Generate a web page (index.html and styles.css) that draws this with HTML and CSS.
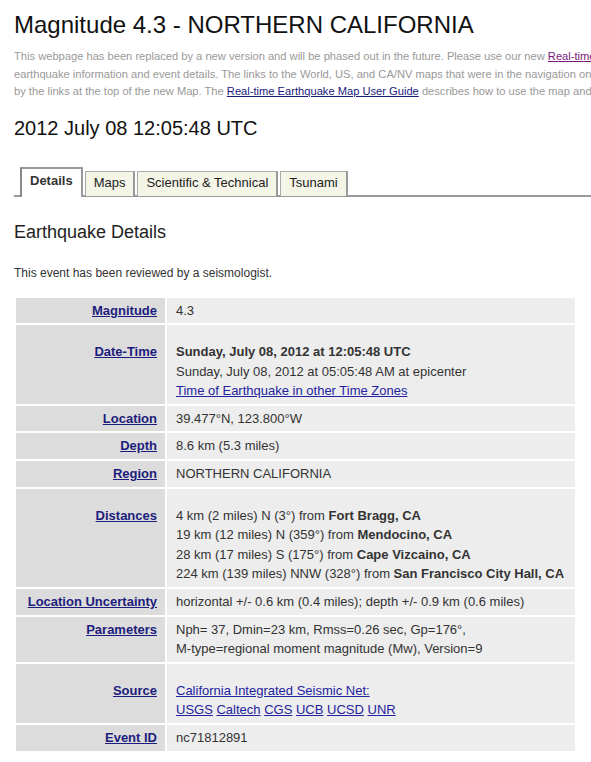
FILE: index.html
```html
<!DOCTYPE html>
<html lang="en">
<head>
    <meta charset="UTF-8">
    <meta name="viewport" content="width=device-width, initial-scale=1.0">
    <title>Magnitude 4.3 - NORTHERN CALIFORNIA</title>
    <link rel="stylesheet" href="styles.css">
</head>
<body>
    <div class="page">
        <h1>Magnitude 4.3 - NORTHERN CALIFORNIA</h1>

        <!-- old page notice, runs off the right edge -->
        <div class="notice">
            <div class="notice-line">This webpage has been replaced by a new version and will be phased out in the future. Please use our new <a href="#" class="visited">Real-time Earthquake Map</a> for the most up-to-date</div>
            <div class="notice-line">earthquake information and event details. The links to the World, US, and CA/NV maps that were in the navigation on the left of this page have been replaced</div>
            <div class="notice-line">by the links at the top of the new Map. The <a href="#">Real-time Earthquake Map User Guide</a> describes how to use the map and its features.</div>
        </div>

        <h2 class="event-time">2012 July 08 12:05:48 UTC</h2>

        <ul class="tabs">
            <li class="tab active">Details</li>
            <li class="tab">Maps</li>
            <li class="tab">Scientific &amp; Technical</li>
            <li class="tab">Tsunami</li>
        </ul>

        <h3>Earthquake Details</h3>

        <p class="reviewed">This event has been reviewed by a seismologist.</p>

        <table class="details">
            <tr>
                <th><a href="#">Magnitude</a></th>
                <td>4.3</td>
            </tr>
            <tr class="spaced">
                <th><a href="#">Date-Time</a></th>
                <td>
                    <strong>Sunday, July 08, 2012 at 12:05:48 UTC</strong><br>
                    Sunday, July 08, 2012 at 05:05:48 AM at epicenter<br>
                    <a href="#">Time of Earthquake in other Time Zones</a>
                </td>
            </tr>
            <tr>
                <th><a href="#">Location</a></th>
                <td>39.477&deg;N, 123.800&deg;W</td>
            </tr>
            <tr>
                <th><a href="#">Depth</a></th>
                <td>8.6 km (5.3 miles)</td>
            </tr>
            <tr>
                <th><a href="#">Region</a></th>
                <td>NORTHERN CALIFORNIA</td>
            </tr>
            <tr class="spaced">
                <th><a href="#">Distances</a></th>
                <td>
                    4 km (2 miles) N (3&deg;) from <strong>Fort Bragg, CA</strong><br>
                    19 km (12 miles) N (359&deg;) from <strong>Mendocino, CA</strong><br>
                    28 km (17 miles) S (175&deg;) from <strong>Cape Vizcaino, CA</strong><br>
                    224 km (139 miles) NNW (328&deg;) from <strong>San Francisco City Hall, CA</strong>
                </td>
            </tr>
            <tr>
                <th><a href="#">Location Uncertainty</a></th>
                <td>horizontal +/- 0.6 km (0.4 miles); depth +/- 0.9 km (0.6 miles)</td>
            </tr>
            <tr>
                <th><a href="#">Parameters</a></th>
                <td>
                    Nph= 37, Dmin=23 km, Rmss=0.26 sec, Gp=176&deg;,<br>
                    M-type=regional moment magnitude (Mw), Version=9
                </td>
            </tr>
            <tr class="spaced">
                <th><a href="#">Source</a></th>
                <td>
                    <a href="#">California Integrated Seismic Net:</a><br>
                    <a href="#">USGS</a> <a href="#">Caltech</a> <a href="#">CGS</a> <a href="#">UCB</a> <a href="#">UCSD</a> <a href="#">UNR</a>
                </td>
            </tr>
            <tr>
                <th><a href="#">Event ID</a></th>
                <td>nc71812891</td>
            </tr>
        </table>
    </div>
</body>
</html>
```

FILE: styles.css
```css
* {
    margin: 0;
    padding: 0;
    box-sizing: border-box;
}

html,
body {
    overflow-x: hidden;
}

body {
    font-family: "Liberation Sans", Arial, sans-serif;
    background-color: #fff;
    color: #333;
}

.page {
    padding-left: 14px;
}

h1 {
    margin-top: 11px;
    font-size: 24px;
    line-height: 28px;
    font-weight: normal;
    color: #111;
    white-space: nowrap;
}

.notice {
    margin-top: 9px;
    overflow: hidden;
    color: #999;
    font-size: 11.15px;
    line-height: 17.5px;
}

.notice-line {
    white-space: nowrap;
}

.notice a {
    color: #1a1a80;
}

.notice a.visited {
    color: #7a1a7a;
}

.event-time {
    margin-top: 15px;
    font-size: 20px;
    line-height: 24px;
    font-weight: normal;
    color: #111;
}

.tabs {
    list-style: none;
    display: flex;
    align-items: flex-end;
    gap: 2px;
    margin-top: 29px;
    padding-left: 6px;
    height: 28px;
    border-bottom: 2px solid #999;
}

.tab {
    height: 25px;
    margin-bottom: -1px;
    padding: 0 8px;
    font-size: 13px;
    line-height: 22px;
    color: #222;
    background-color: #f4f4e7;
    border: 1px solid #aaa;
    border-right: 2px solid #999;
    border-bottom: none;
}

.tab.active {
    height: 30px;
    margin-bottom: -2px;
    padding-top: 1px;
    font-weight: bold;
    color: #333;
    background-color: #fff;
    border-left: 2px solid #888;
    border-top: 2px solid #999;
}

h3 {
    margin-top: 24px;
    font-size: 18px;
    line-height: 22px;
    font-weight: normal;
    color: #222;
}

.reviewed {
    margin-top: 22px;
    font-size: 12px;
    line-height: 16px;
    color: #333;
}

.details {
    margin-top: 15px;
    width: 563px;
    table-layout: fixed;
    border-spacing: 2px;
    font-size: 13px;
    line-height: 19.6px;
}

.details th,
.details td {
    padding: 3px 9px;
    vertical-align: baseline;
}

.details th {
    width: 149px;
    padding-right: 8px;
    text-align: right;
    background-color: #dcdcdc;
    white-space: nowrap;
}

.details td {
    background-color: #ededed;
    color: #333;
}

.details .spaced th,
.details .spaced td {
    padding-top: 17px;
}

.details th a {
    color: #1c1c7c;
    font-weight: bold;
}

.details td a {
    color: #2323a0;
}

.details strong {
    color: #333;
}
```
